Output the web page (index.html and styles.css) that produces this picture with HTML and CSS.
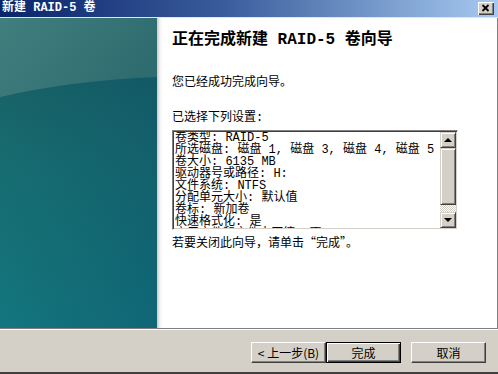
FILE: index.html
```html
<!DOCTYPE html>
<html lang="zh-CN">
<head>
  <meta charset="UTF-8">
  <title>新建 RAID-5 卷</title>
  <link rel="stylesheet" href="styles.css">
</head>
<body>

  <div class="window">

    <div class="titlebar">
      <span class="title">新建 RAID-5 卷</span>
      <span class="close">
        <svg width="16" height="13" viewBox="0 0 16 13">
          <path d="M4.5 3 L10.5 9 M10.5 3 L4.5 9" stroke="#000" stroke-width="1.8" fill="none"/>
        </svg>
      </span>
    </div>

    <div class="main">

      <div class="side">
        <svg width="157" height="310" viewBox="0 0 157 310">
          <defs>
            <linearGradient id="deep" x1="0" y1="0" x2="0" y2="1">
              <stop offset="0" stop-color="#175a60"/>
              <stop offset="0.45" stop-color="#176c70"/>
              <stop offset="1" stop-color="#13767f"/>
            </linearGradient>
            <linearGradient id="shadeRight" x1="0" y1="0" x2="1" y2="0">
              <stop offset="0" stop-color="#0a4a5a" stop-opacity="0"/>
              <stop offset="1" stop-color="#0a4a66" stop-opacity="0.35"/>
            </linearGradient>
            <linearGradient id="light" x1="0" y1="0" x2="1" y2="0.4">
              <stop offset="0" stop-color="#417f7e"/>
              <stop offset="1" stop-color="#2f6c70"/>
            </linearGradient>
          </defs>
          <rect width="157" height="310" fill="url(#deep)"/>
          <rect width="157" height="310" fill="url(#shadeRight)"/>
          <path d="M0 0 H157 V59 A350 117 0 0 0 0 79 Z" fill="url(#light)"/>
        </svg>
      </div>

      <div class="content">
        <h1 class="heading">正在完成新建 RAID-5 卷向导</h1>

        <p class="done">您已经成功完成向导。</p>

        <p class="label">已选择下列设置:</p>

        <div class="listbox">
          <div class="lines">
            <div>卷类型: RAID-5</div>
            <div>所选磁盘: 磁盘 1, 磁盘 3, 磁盘 4, 磁盘 5</div>
            <div>卷大小: 6135 MB</div>
            <div>驱动器号或路径: H:</div>
            <div>文件系统: NTFS</div>
            <div>分配单元大小: 默认值</div>
            <div>卷标: 新加卷</div>
            <div>快速格式化: 是</div>
            <div>启用文件和文件夹压缩: 否</div>
          </div>
          <div class="scrollbar">
            <div class="sb-button"><span class="arrow-up"></span></div>
            <div class="sb-thumb"></div>
            <div class="sb-track"></div>
            <div class="sb-button"><span class="arrow-down"></span></div>
          </div>
        </div>

        <p class="hint">若要关闭此向导，请单击“完成”。</p>
      </div>

    </div>

    <div class="footer">
      <button class="btn">&lt; 上一步(B)</button>
      <button class="btn default">完成</button>
      <button class="btn cancel">取消</button>
    </div>

  </div>

</body>
</html>
```

FILE: styles.css
```css
body {
  margin: 0;
  font-family: "Liberation Mono", "Noto Sans CJK SC", monospace;
  font-size: 12px;
  color: #000;
  background-color: #d4d0c8;
}

.window {
  width: 498px;
  height: 374px;
  display: flex;
  flex-direction: column;
  background-color: #d4d0c8;
}

.titlebar {
  height: 17px;
  display: flex;
  align-items: center;
  justify-content: space-between;
  padding: 0 4px 0 2px;
  background: linear-gradient(to right, #0a246a, #3a5c9c 45%, #a6caf0);
  border-bottom: 1px solid #dde6ea;
}

.title {
  color: #fff;
  font-weight: bold;
  font-size: 12px;
  line-height: 17px;
}

.close {
  width: 16px;
  height: 13px;
  display: flex;
  box-sizing: border-box;
  background-color: #d4d0c8;
  box-shadow: inset 1px 1px #fff, inset -1px -1px #404040, inset -2px -2px #808080;
}

.main {
  height: 310px;
  display: flex;
  border-right: 1px solid #808080;
}

.side {
  width: 157px;
  height: 310px;
}

.side svg {
  display: block;
}

.content {
  flex: 1;
  padding: 12px 0 0 15px;
  background: linear-gradient(to right, #c8c8c8, #f4f4f4 3px, #fff 6px);
}

.heading {
  margin: 0;
  font-size: 16px;
  line-height: 20px;
  font-weight: bold;
}

.done {
  margin: 26px 0 0;
  line-height: 14px;
}

.label {
  margin: 21px 0 0;
  line-height: 14px;
}

.listbox {
  width: 286px;
  height: 100px;
  margin-top: 5px;
  box-sizing: border-box;
  display: flex;
  border: 1px solid;
  border-color: #808080 #fff #fff #808080;
  box-shadow: inset 1px 1px #404040, inset -1px -1px #d4d0c8;
  padding: 1px;
  background-color: #fff;
}

.lines {
  flex: 1;
  padding-left: 1px;
  line-height: 12px;
  overflow: hidden;
  white-space: nowrap;
}

.scrollbar {
  width: 16px;
  display: flex;
  flex-direction: column;
}

.sb-button,
.sb-thumb {
  box-sizing: border-box;
  background-color: #d4d0c8;
  border: 1px solid;
  border-color: #d4d0c8 #404040 #404040 #d4d0c8;
  box-shadow: inset 1px 1px #fff, inset -1px -1px #808080;
}

.sb-button {
  height: 16px;
  display: flex;
  align-items: center;
  justify-content: center;
}

.sb-thumb {
  height: 57px;
}

.sb-track {
  flex: 1;
  background: repeating-conic-gradient(#d4d0c8 0 25%, #fff 0 50%) 0 0 / 2px 2px;
}

.arrow-up {
  width: 0;
  border-left: 4px solid transparent;
  border-right: 4px solid transparent;
  border-bottom: 4px solid #000;
}

.arrow-down {
  width: 0;
  border-left: 4px solid transparent;
  border-right: 4px solid transparent;
  border-top: 4px solid #000;
}

.hint {
  margin: 5px 0 0;
  line-height: 14px;
  font-family: "Noto Sans CJK SC", sans-serif;
}

.footer {
  flex: 1;
  display: flex;
  justify-content: flex-end;
  align-items: flex-start;
  padding: 13px 12px 0 0;
  border-top: 1px solid #808080;
  border-bottom: 2px solid #404040;
  box-shadow: inset 0 1px #fff;
}

.btn {
  width: 75px;
  height: 21px;
  padding: 0;
  font-family: "Noto Sans CJK SC", sans-serif;
  font-size: 12px;
  line-height: 17px;
  color: #000;
  background-color: #d4d0c8;
  border: 1px solid;
  border-color: #fff #404040 #404040 #fff;
  box-shadow: inset -1px -1px #808080;
}

.btn.default {
  border-color: #000;
  box-shadow: inset 1px 1px #fff, inset -1px -1px #404040, inset -2px -2px #808080;
}

.btn.cancel {
  margin-left: 10px;
}
```
